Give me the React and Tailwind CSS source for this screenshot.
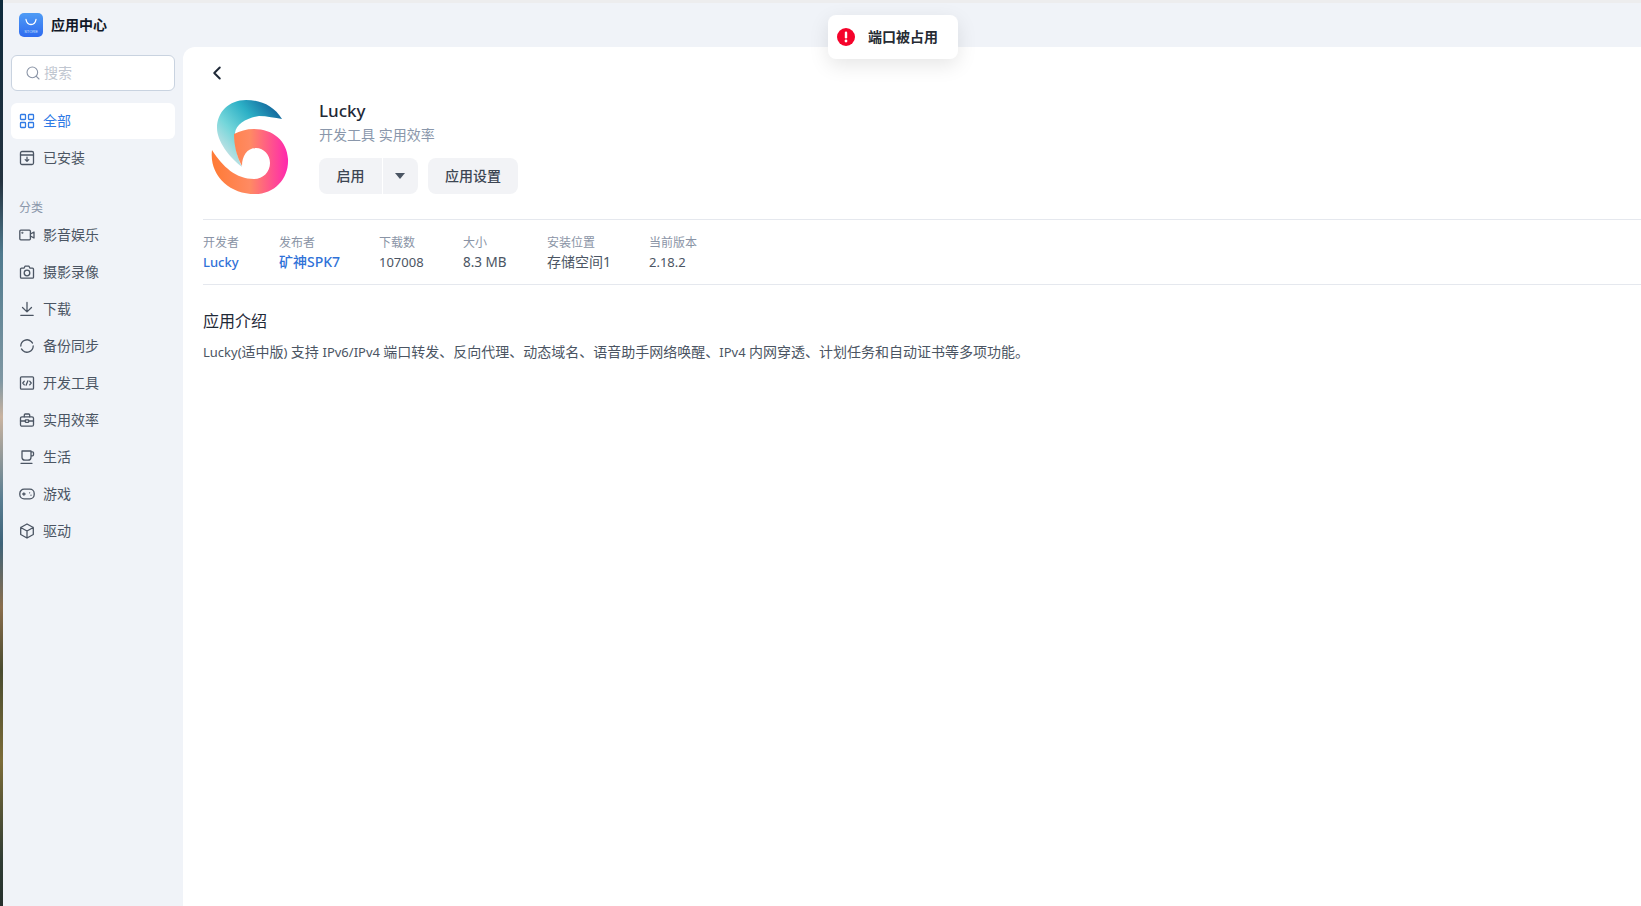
import React from "react";
import { Search, ChevronLeft } from "lucide-react";

function Ico({ children, className = "" }) {
  return (
    <svg width="16" height="16" viewBox="0 0 16 16" fill="none" stroke="currentColor" strokeWidth="1.300" strokeLinecap="round" strokeLinejoin="round" className={className}>
      {children}
    </svg>
  );
}

const GridIcon = (p) => (
  <Ico {...p}>
    <rect x="1.500" y="1.500" width="5" height="5" rx="0.800" />
    <rect x="9.500" y="1.500" width="5" height="5" rx="0.800" />
    <rect x="1.500" y="9.500" width="5" height="5" rx="0.800" />
    <rect x="9.500" y="9.500" width="5" height="5" rx="0.800" />
  </Ico>
);
const InstalledIcon = (p) => (
  <Ico {...p}>
    <rect x="1.500" y="1.500" width="13" height="13" rx="1.500" />
    <path d="M1.500 5h13M8 7.200v4M6.200 9.600 8 11.300l1.800-1.700" />
  </Ico>
);
const VideoIcon = (p) => (
  <Ico {...p}>
    <rect x="0.800" y="3.200" width="10.600" height="9.600" rx="1" />
    <path d="M11.400 7 15 5v6l-3.600-2" />
    <circle cx="3.400" cy="5.800" r="0.400" />
  </Ico>
);
const CameraIcon = (p) => (
  <Ico {...p}>
    <path d="M2.500 4.200H5l1-2h4l1 2h2.500a1 1 0 0 1 1 1v8a1 1 0 0 1-1 1h-11a1 1 0 0 1-1-1v-8a1 1 0 0 1 1-1z" />
    <circle cx="8" cy="9" r="2.800" />
  </Ico>
);
const DownloadIcon = (p) => (
  <Ico {...p}>
    <path d="M8 1.500v9.300M3.500 6.500 8 10.900l4.500-4.400M1.800 14.300h12.400" />
  </Ico>
);
const SyncIcon = (p) => (
  <Ico {...p}>
    <path d="M1.800 8a6.200 6.200 0 0 1 10.400-4.500L13.500 5M14.200 8a6.200 6.200 0 0 1-10.400 4.500L2.500 11" />
  </Ico>
);
const CodeIcon = (p) => (
  <Ico {...p}>
    <rect x="1.500" y="1.800" width="13" height="12.400" rx="1" />
    <path d="M5.300 6.200 3.800 8l1.500 1.800M10.700 6.200 12.200 8l-1.500 1.800M8.900 5.800 7.100 10.200" />
  </Ico>
);
const BriefcaseIcon = (p) => (
  <Ico {...p}>
    <rect x="1.500" y="4.800" width="13" height="9.400" rx="1.500" />
    <path d="M5.300 4.800V3a1 1 0 0 1 1-1h3.400a1 1 0 0 1 1 1v1.800M1.500 9h4.800M9.700 9h4.800" />
    <rect x="6.300" y="7.800" width="3.400" height="2.500" rx="0.500" />
  </Ico>
);
const CoffeeIcon = (p) => (
  <Ico {...p}>
    <path d="M3 2h9v6.200a3 3 0 0 1-3 3H6a3 3 0 0 1-3-3zM12 2.800h1.500a1 1 0 0 1 1 1v2a1 1 0 0 1-1 1H12M2 14.300h11" />
  </Ico>
);
const GameIcon = (p) => (
  <Ico {...p}>
    <rect x="0.800" y="3.200" width="14.400" height="9.600" rx="4.300" />
    <path d="M3.700 8h2.400M4.900 6.800v2.400M10.600 6.800h.01M12 9.200h.01" />
  </Ico>
);
const BoxIcon = (p) => (
  <Ico {...p}>
    <path d="M8 1 14.300 4.500v7L8 15l-6.300-3.500v-7zM1.700 4.500 8 8l6.300-3.500M8 8v7" />
  </Ico>
);

const cats = [
  ["影音娱乐", VideoIcon],
  ["摄影录像", CameraIcon],
  ["下载", DownloadIcon],
  ["备份同步", SyncIcon],
  ["开发工具", CodeIcon],
  ["实用效率", BriefcaseIcon],
  ["生活", CoffeeIcon],
  ["游戏", GameIcon],
  ["驱动", BoxIcon],
];

const stats = [
  ["开发者", "Lucky", "w-[76px]", "text-[13px] font-medium text-[#2f72d8]"],
  ["发布者", "矿神SPK7", "w-[100px]", "text-[14px] font-medium text-[#2f72d8]"],
  ["下载数", "107008", "w-[84px]", "text-[13px] text-[#4b5563]"],
  ["大小", "8.3 MB", "w-[84px]", "text-[13.500px] text-[#4b5563]"],
  ["安装位置", "存储空间1", "w-[102px]", "text-[14px] text-[#4b5563]"],
  ["当前版本", "2.18.2", "w-[80px]", "text-[13px] text-[#4b5563]"],
];

function NavItem({ label, Icon }) {
  return (
    <div className="flex h-[37px] items-center pl-[8px] text-[14px] text-[#4b5563]">
      <Icon className="mr-[8px] text-[#4b5563]" />
      <span>{label}</span>
    </div>
  );
}

function StoreIcon() {
  return (
    <svg width="24" height="24" viewBox="0 0 24 24">
      <defs>
        <linearGradient id="st" x1="0" y1="0" x2="0" y2="1">
          <stop offset="0" stopColor="#4f9cf5" />
          <stop offset="1" stopColor="#2f6bf0" />
        </linearGradient>
      </defs>
      <rect width="24" height="24" rx="5" fill="url(#st)" />
      <path d="M7 6.500c.6 3.400 2.500 5 5 5s4.400-1.600 5-5" fill="none" stroke="#fff" strokeWidth="1.300" strokeLinecap="round" />
      <text x="12" y="19.500" textAnchor="middle" fontSize="4" fill="#cfe2ff" fontFamily="Liberation Sans">STORE</text>
    </svg>
  );
}

function LuckyLogo() {
  return (
    <svg width="100" height="110" viewBox="0 0 100 110" className="block">
      <defs>
        <linearGradient id="lt" x1="24" y1="72" x2="84" y2="20" gradientUnits="userSpaceOnUse">
          <stop offset="0" stopColor="#dfe6e8" />
          <stop offset="0.35" stopColor="#74d6da" />
          <stop offset="0.65" stopColor="#2cb0c6" />
          <stop offset="1" stopColor="#0f5c96" />
        </linearGradient>
        <linearGradient id="lp" x1="12" y1="70" x2="90" y2="70" gradientUnits="userSpaceOnUse">
          <stop offset="0" stopColor="#ff7a33" />
          <stop offset="0.5" stopColor="#ff8a63" />
          <stop offset="1" stopColor="#ff25b0" />
        </linearGradient>
      </defs>
      <path d="M83 28C75 15 62 9 47 9C30 9 18 21 18 37C18 50 30 66 43 76C38 66 35 52 36 42C37 33 48 27 60 25C68 25 76 27 83 28Z" fill="url(#lt)" />
      <path d="M13 59C10 84 30 103 56 103C76 103 90 87 89 68C88 50 74 38 55 38C47 38 41 40 35 43C35 55 38 66 43 75C43 65 48 57 57 57C65 57 71 64 71 72C71 81 64 88 55 88C37 88 24 76 13 59Z" fill="url(#lp)" />
    </svg>
  );
}

const L = ({ children }) => <span className="text-[13px]">{children}</span>;

export default function App() {
  return (
    <div
      className="flex h-[906px] w-full overflow-hidden bg-[#f0f3f8] text-[#1f2937]"
      style={{ fontFamily: '"Noto Sans", "Noto Sans CJK SC", sans-serif' }}
    >
      <div className="w-[3px] shrink-0 bg-[linear-gradient(180deg,#0d2a3c_0%,#24323f_20%,#4f7a8e_28%,#7f97a3_42%,#c9b3a0_46%,#5a7e92_55%,#3e6379_60%,#8a6d4c_67%,#4a4c30_74%,#7c6c38_84%,#2f3c34_95%,#25302c_100%)]" />
      <div className="flex min-w-0 flex-1 flex-col">
        <div className="h-[3px] shrink-0 bg-[#ededee]" />
        <header className="flex h-[44px] shrink-0 items-center pl-[16px]">
          <StoreIcon />
          <span className="ml-[8px] pb-[2px] text-[14px] font-bold text-[#111827]">应用中心</span>
        </header>
        <div className="flex min-h-0 flex-1">
          <aside className="w-[180px] shrink-0 pl-[8px] pr-[8px] pt-[8px]">
            <div className="flex h-[36px] w-[164px] items-center rounded-md border border-[#c9d3e0] bg-white pb-[1px] pl-[13px] text-[14px] text-[#c0c6d0]">
              <Search size={16} strokeWidth={1.600} className="mr-[3px] text-[#8a94a6]" />
              <span>搜索</span>
            </div>
            <div className="mt-[12px] w-[164px]">
              <div className="flex h-[36px] items-center rounded-md bg-white pb-[1px] pl-[8px] text-[14px] text-[#2f7ae5]">
                <GridIcon className="mr-[8px]" />
                <span>全部</span>
              </div>
              <NavItem label="已安装" Icon={InstalledIcon} />
              <div className="mt-[23px] flex h-[17px] items-center pl-[8px] text-[12px] text-[#8a97ab]">分类</div>
              {cats.map(([label, Icon]) => (
                <NavItem key={label} label={label} Icon={Icon} />
              ))}
            </div>
          </aside>
          <main className="min-w-0 flex-1 rounded-tl-xl bg-white pl-[20px]">
            <div className="flex h-[52px] items-center pl-[3px]">
              <ChevronLeft size={22} strokeWidth={2.200} className="text-[#1f2937]" />
            </div>
            <div className="flex h-[121px] items-start border-b border-[#e5e8ee]">
              <div className="-ml-[4px] -mt-[8px] h-[110px] w-[120px] shrink-0">
                <LuckyLogo />
              </div>
              <div>
                <div className="text-[17px] leading-[24px] font-medium text-[#1f2937]">Lucky</div>
                <div className="mt-[1px] text-[14px] leading-[22px] text-[#8a97ab]">开发工具 实用效率</div>
                <div className="mt-[12px] flex h-[36px] text-[14px] font-medium text-[#3d4653]">
                  <div className="flex w-[64px] items-center justify-center rounded-l-lg border-r border-white bg-[#f2f3f6] pb-[2px]">启用</div>
                  <div className="flex w-[35px] items-center justify-center rounded-r-lg bg-[#f2f3f6] pr-[1px]">
                    <svg width="10" height="6" viewBox="0 0 10 6"><path d="M0 0h10L5 6z" fill="#4b5563" /></svg>
                  </div>
                  <div className="ml-[10px] flex w-[90px] items-center justify-center rounded-lg bg-[#f2f3f6] pb-[2px]">应用设置</div>
                </div>
              </div>
            </div>
            <div className="flex h-[65px] items-start border-b border-[#e5e8ee] pt-[13px]">
              {stats.map(([k, v, w, cls]) => (
                <div key={k} className={w}>
                  <div className="text-[12px] leading-[20px] text-[#8a94a6]">{k}</div>
                  <div className={`-mt-[2px] leading-[22px] ${cls}`}>{v}</div>
                </div>
              ))}
            </div>
            <h2 className="mt-[23px] text-[16px] leading-[26px] font-normal text-[#1f2937]">应用介绍</h2>
            <p className="mt-[6px] text-[14px] leading-[24px] text-[#4b5563]">
              <L>Lucky(</L>适中版<L>) </L>支持 <L>IPv6/IPv4 </L>端口转发、反向代理、动态域名、语音助手网络唤醒、<L>IPv4 </L>内网穿透、计划任务和自动证书等多项功能。
            </p>
          </main>
        </div>
      </div>
      <div className="absolute left-[828px] top-[15px] flex h-[44px] w-[130px] items-center rounded-lg bg-white pl-[9px] shadow-[0_6px_20px_rgba(0,0,0,0.1)]">
        <svg width="18" height="18" viewBox="0 0 18 18">
          <circle cx="9" cy="9" r="9" fill="#f5032b" />
          <rect x="7.800" y="3.500" width="2.400" height="7" rx="1.200" fill="#fff" />
          <circle cx="9" cy="13" r="1.400" fill="#fff" />
        </svg>
        <span className="ml-[13px] pb-[2px] text-[14px] font-semibold text-[#262b33]">端口被占用</span>
      </div>
    </div>
  );
}
